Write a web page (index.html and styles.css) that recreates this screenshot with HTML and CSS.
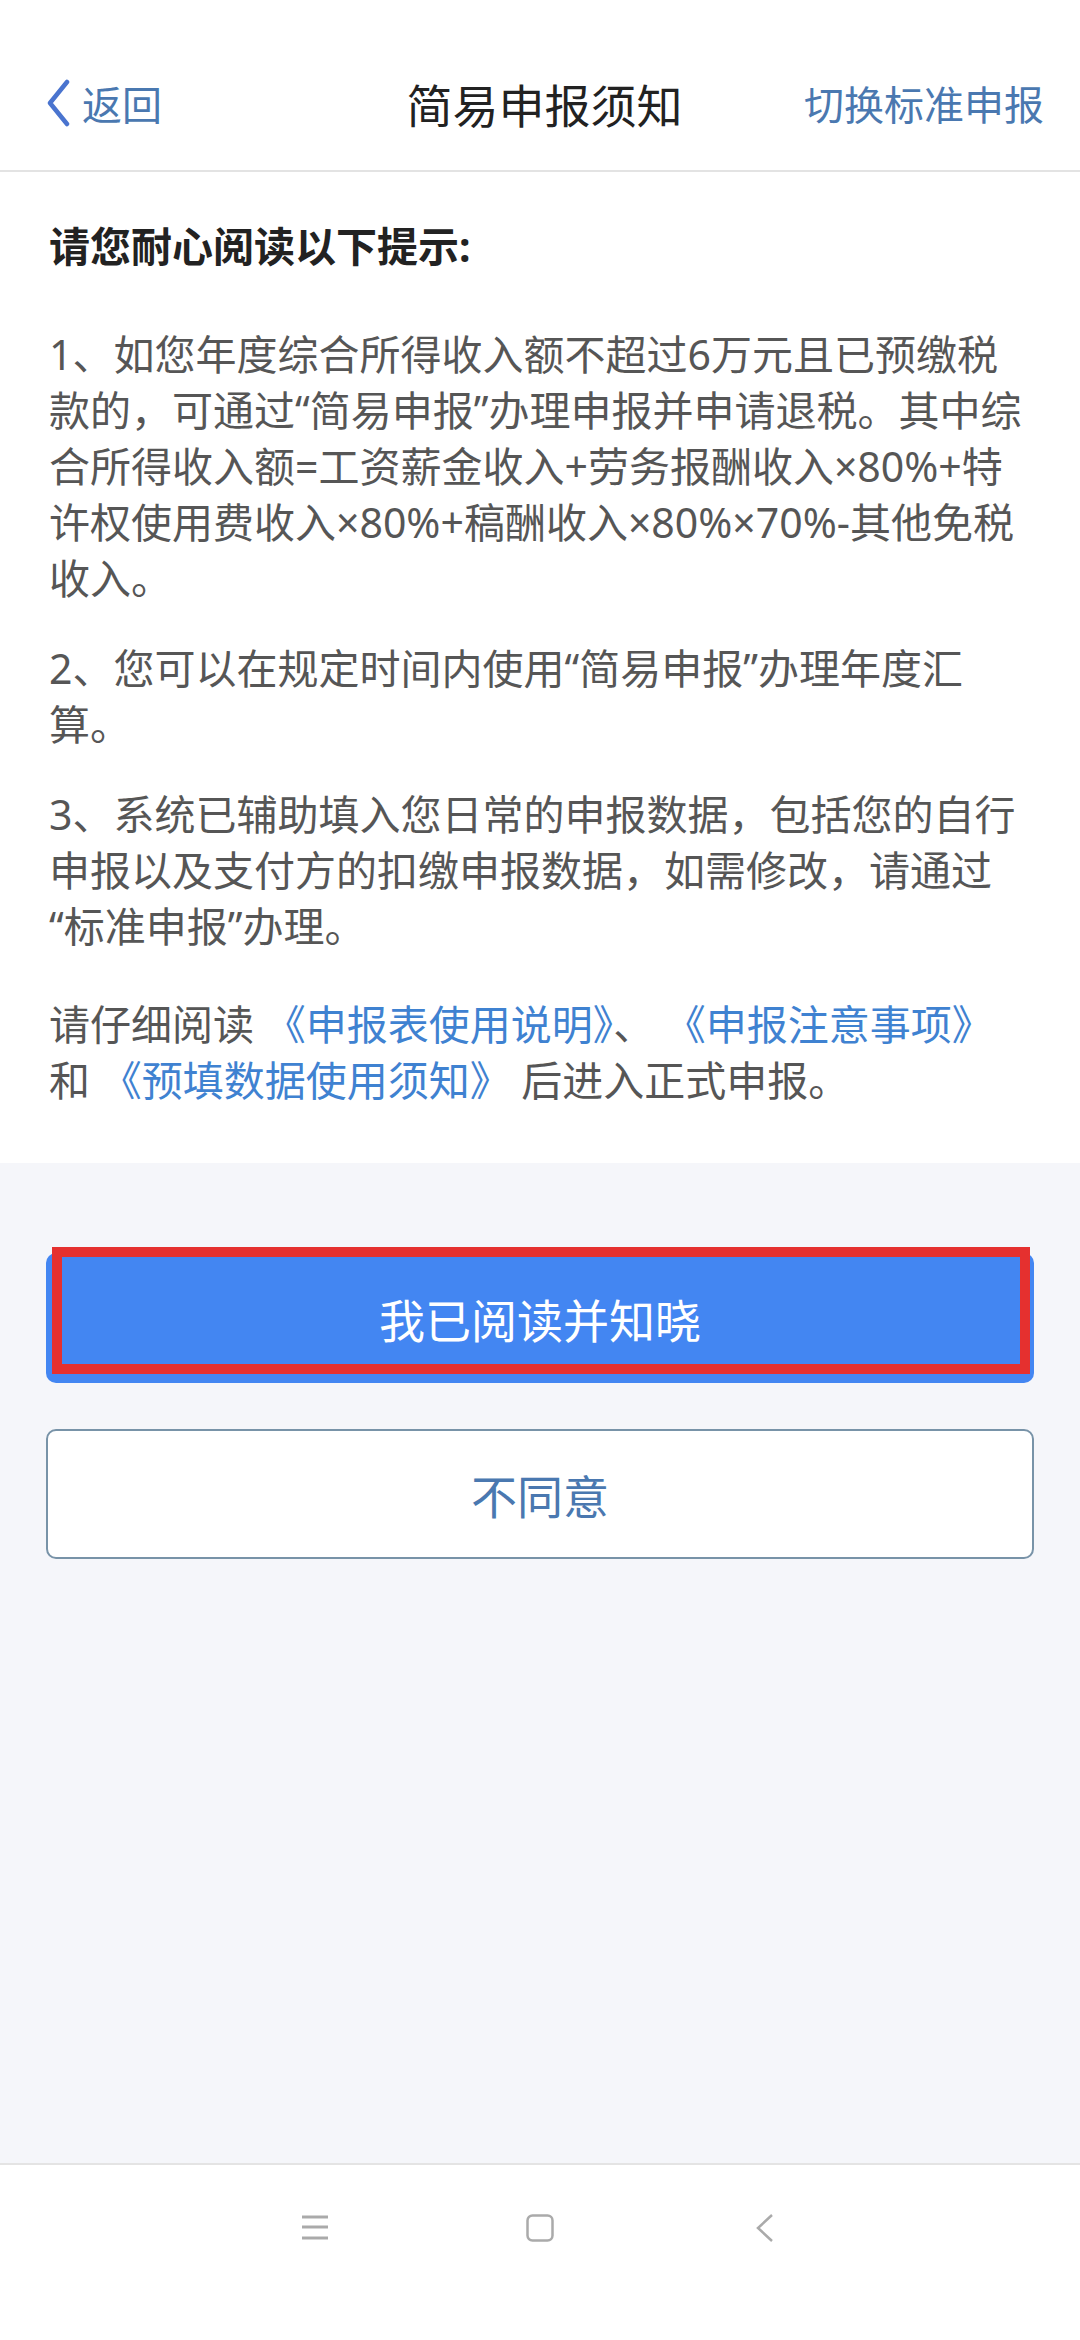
FILE: index.html
```html
<!DOCTYPE html>
<html lang="zh-CN">
<head>
  <meta charset="UTF-8" />
  <meta name="viewport" content="width=device-width, initial-scale=1.0"/>
  <title>简易申报须知</title>
  <link rel="stylesheet" href="styles.css">
</head>
<body>
  <div class="app">
    <header class="topbar">
      <a class="back" href="#">
        <svg width="26" height="48" viewBox="0 0 26 48">
          <polyline points="22,3 5,24 22,45" fill="none" stroke="#4a74cf" stroke-width="4.5" stroke-linecap="round" stroke-linejoin="round"/>
        </svg>
        <span>返回</span>
      </a>
      <h1 class="title">简易申报须知</h1>
      <a class="switch" href="#">切换标准申报</a>
    </header>

    <main class="notice">
      <h2>请您耐心阅读以下提示:</h2>
      <p>1、如您年度综合所得收入额不超过6万元且已预缴税款的，可通过“简易申报”办理申报并申请退税。其中综合所得收入额=工资薪金收入+劳务报酬收入×80%+特许权使用费收入×80%+稿酬收入×80%×70%-其他免税收入。</p>
      <p>2、您可以在规定时间内使用“简易申报”办理年度汇算。</p>
      <p>3、系统已辅助填入您日常的申报数据，包括您的自行申报以及支付方的扣缴申报数据，如需修改，请通过<br>“标准申报”办理。</p>
      <p class="links">请仔细阅读 <a href="#">《申报表使用说明》</a>、 <a href="#">《申报注意事项》</a> 和 <a href="#">《预填数据使用须知》</a> 后进入正式申报。</p>
    </main>

    <section class="actions">
      <div class="btn-wrap">
        <button class="btn primary">我已阅读并知晓</button>
        <div class="mark"></div>
      </div>
      <button class="btn outline">不同意</button>
    </section>

    <footer class="navbar">
      <svg width="28" height="28" viewBox="0 0 28 28">
        <g stroke="#aaa" stroke-width="3">
          <line x1="1" y1="3" x2="27" y2="3"/>
          <line x1="1" y1="13" x2="27" y2="13"/>
          <line x1="1" y1="24" x2="27" y2="24"/>
        </g>
      </svg>
      <svg width="28" height="28" viewBox="0 0 28 28">
        <rect x="1.5" y="1.5" width="25" height="25" rx="5" fill="none" stroke="#aaa" stroke-width="2.5"/>
      </svg>
      <svg width="28" height="28" viewBox="0 0 28 28">
        <polyline points="21,1 7,14 21,27" fill="none" stroke="#aaa" stroke-width="2.5"/>
      </svg>
    </footer>
  </div>
</body>
</html>
```

FILE: styles.css
```css
html, body {
  margin: 0;
  padding: 0;
}

body {
  font-family: "Noto Sans CJK SC", sans-serif;
  background: #fff;
  color: #565656;
}

a {
  text-decoration: none;
}

.app {
  display: flex;
  flex-direction: column;
  min-height: 2340px;
}

/* top bar */
.topbar {
  box-sizing: border-box;
  height: 172px;
  padding: 36px 36px 0 45px;
  display: grid;
  grid-template-columns: 1fr auto 1fr;
  align-items: center;
  background: #fff;
  border-bottom: 2px solid #e3e3e3;
  box-shadow: 0 2px 3px rgba(0, 0, 0, 0.04);
}

.back {
  display: flex;
  align-items: center;
  gap: 11px;
  color: #4a78b0;
  font-size: 40px;
}

.title {
  margin: 0;
  font-size: 46px;
  font-weight: 400;
  color: #222;
}

.switch {
  justify-self: end;
  color: #4a78b0;
  font-size: 40px;
}

/* notice text; latin font first so quotes, digits and × stay narrow */
.notice {
  padding: 46px 49px 55px;
  background: #fff;
  font-family: "Noto Sans", "Noto Sans CJK SC", sans-serif;
  font-size: 41px;
  line-height: 56px;
}

.notice h2 {
  margin: 0 0 52px;
  font-size: 41px;
  font-weight: 700;
  color: #222;
}

.notice p {
  margin: 0;
}

.notice p + p {
  margin-top: 34px;
}

.notice p.links {
  margin-top: 42px;
}

.links a {
  color: #3f82d1;
}

/* buttons */
.actions {
  flex: 1;
  background: #f5f6fa;
  padding: 90px 46px 0;
  display: flex;
  flex-direction: column;
  gap: 46px;
}

.btn-wrap {
  position: relative;
}

.btn {
  display: block;
  width: 100%;
  height: 130px;
  border-radius: 10px;
  font-family: "Noto Sans CJK SC", sans-serif;
  font-size: 46px;
  cursor: pointer;
}

.primary {
  background: #4386f2;
  color: #fff;
  border: none;
}

.outline {
  background: #fff;
  color: #4a78b0;
  border: 2px solid #7893a8;
}

/* red highlight drawn over the screenshot */
.mark {
  position: absolute;
  left: 6px;
  top: -6px;
  right: 4px;
  bottom: 9px;
  border: 10px solid #e5302f;
  pointer-events: none;
}

/* system nav */
.navbar {
  height: 177px;
  box-sizing: border-box;
  padding-top: 49px;
  background: #fff;
  border-top: 2px solid #e4e4e4;
  display: flex;
  justify-content: center;
  align-items: flex-start;
  gap: 197px;
}
```
